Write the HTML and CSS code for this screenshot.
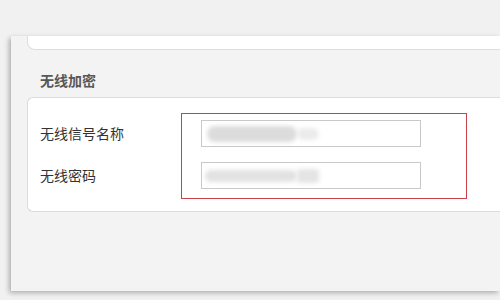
FILE: index.html
```html
<!DOCTYPE html>
<html lang="zh-CN">
<head>
<meta charset="utf-8">
<title>无线加密</title>
<link rel="stylesheet" href="styles.css">
</head>
<body>
<div class="panel">
  <div class="top-card"></div>
  <h3 class="section-title">无线加密</h3>
  <div class="card">
    <div class="labels">
      <div class="label">无线信号名称</div>
      <div class="label">无线密码</div>
    </div>
    <div class="highlight">
      <div class="field"><span class="smudge smudge-a"></span><span class="smudge smudge-b"></span></div>
      <div class="field"><span class="smudge smudge-c"></span><span class="smudge smudge-d"></span></div>
    </div>
  </div>
</div>
</body>
</html>
```
FILE: styles.css
```css
html, body {
  margin: 0;
  padding: 0;
  background: #f0f1f0;
  overflow: hidden;
  width: 500px;
  height: 300px;
  font-family: "Noto Sans CJK SC", "Noto Sans", sans-serif;
}

.panel {
  margin: 36px 0 0 11px;
  height: 255px;
  background: #f2f3f2;
  box-shadow: -2px 2px 5px rgba(0, 0, 0, 0.28);
  padding-left: 16px;
  box-sizing: border-box;
}

.top-card {
  height: 14px;
  background: #fff;
  border: 1px solid #dedede;
  border-top: none;
  border-right: none;
  border-radius: 0 0 0 8px;
  box-sizing: border-box;
}

.section-title {
  margin: 20px 0 7px 13px;
  height: 20px;
  line-height: 20px;
  font-size: 14px;
  font-weight: bold;
  color: #585858;
}

.card {
  display: flex;
  background: #fff;
  border: 1px solid #dcdcdc;
  border-right: none;
  border-radius: 6px 0 0 6px;
  padding: 15px 0 12px 12px;
}

.labels {
  width: 141px;
  padding-top: 7px;
  display: flex;
  flex-direction: column;
  gap: 15px;
}

.label {
  height: 27px;
  line-height: 27px;
  font-size: 14px;
  color: #333;
}

.highlight {
  width: 286px;
  box-sizing: border-box;
  border: 1px solid #c8404a;
  padding: 6px 0 9px 19px;
  display: flex;
  flex-direction: column;
  gap: 15px;
}

.field {
  width: 220px;
  height: 27px;
  box-sizing: border-box;
  border: 1px solid #c9c9c9;
  display: flex;
  align-items: center;
  padding-left: 3px;
}

.smudge {
  display: block;
  background: #dcdcdc;
  filter: blur(2px);
  border-radius: 8px;
}

.smudge-a {
  width: 90px;
  height: 16px;
  margin-left: 2px;
}

.smudge-b {
  width: 22px;
  height: 12px;
  background: #ebebeb;
}

.smudge-c {
  width: 92px;
  height: 12px;
  background: #e2e2e2;
}

.smudge-d {
  width: 22px;
  height: 14px;
  background: #e4e4e4;
  border-radius: 2px;
}
```
